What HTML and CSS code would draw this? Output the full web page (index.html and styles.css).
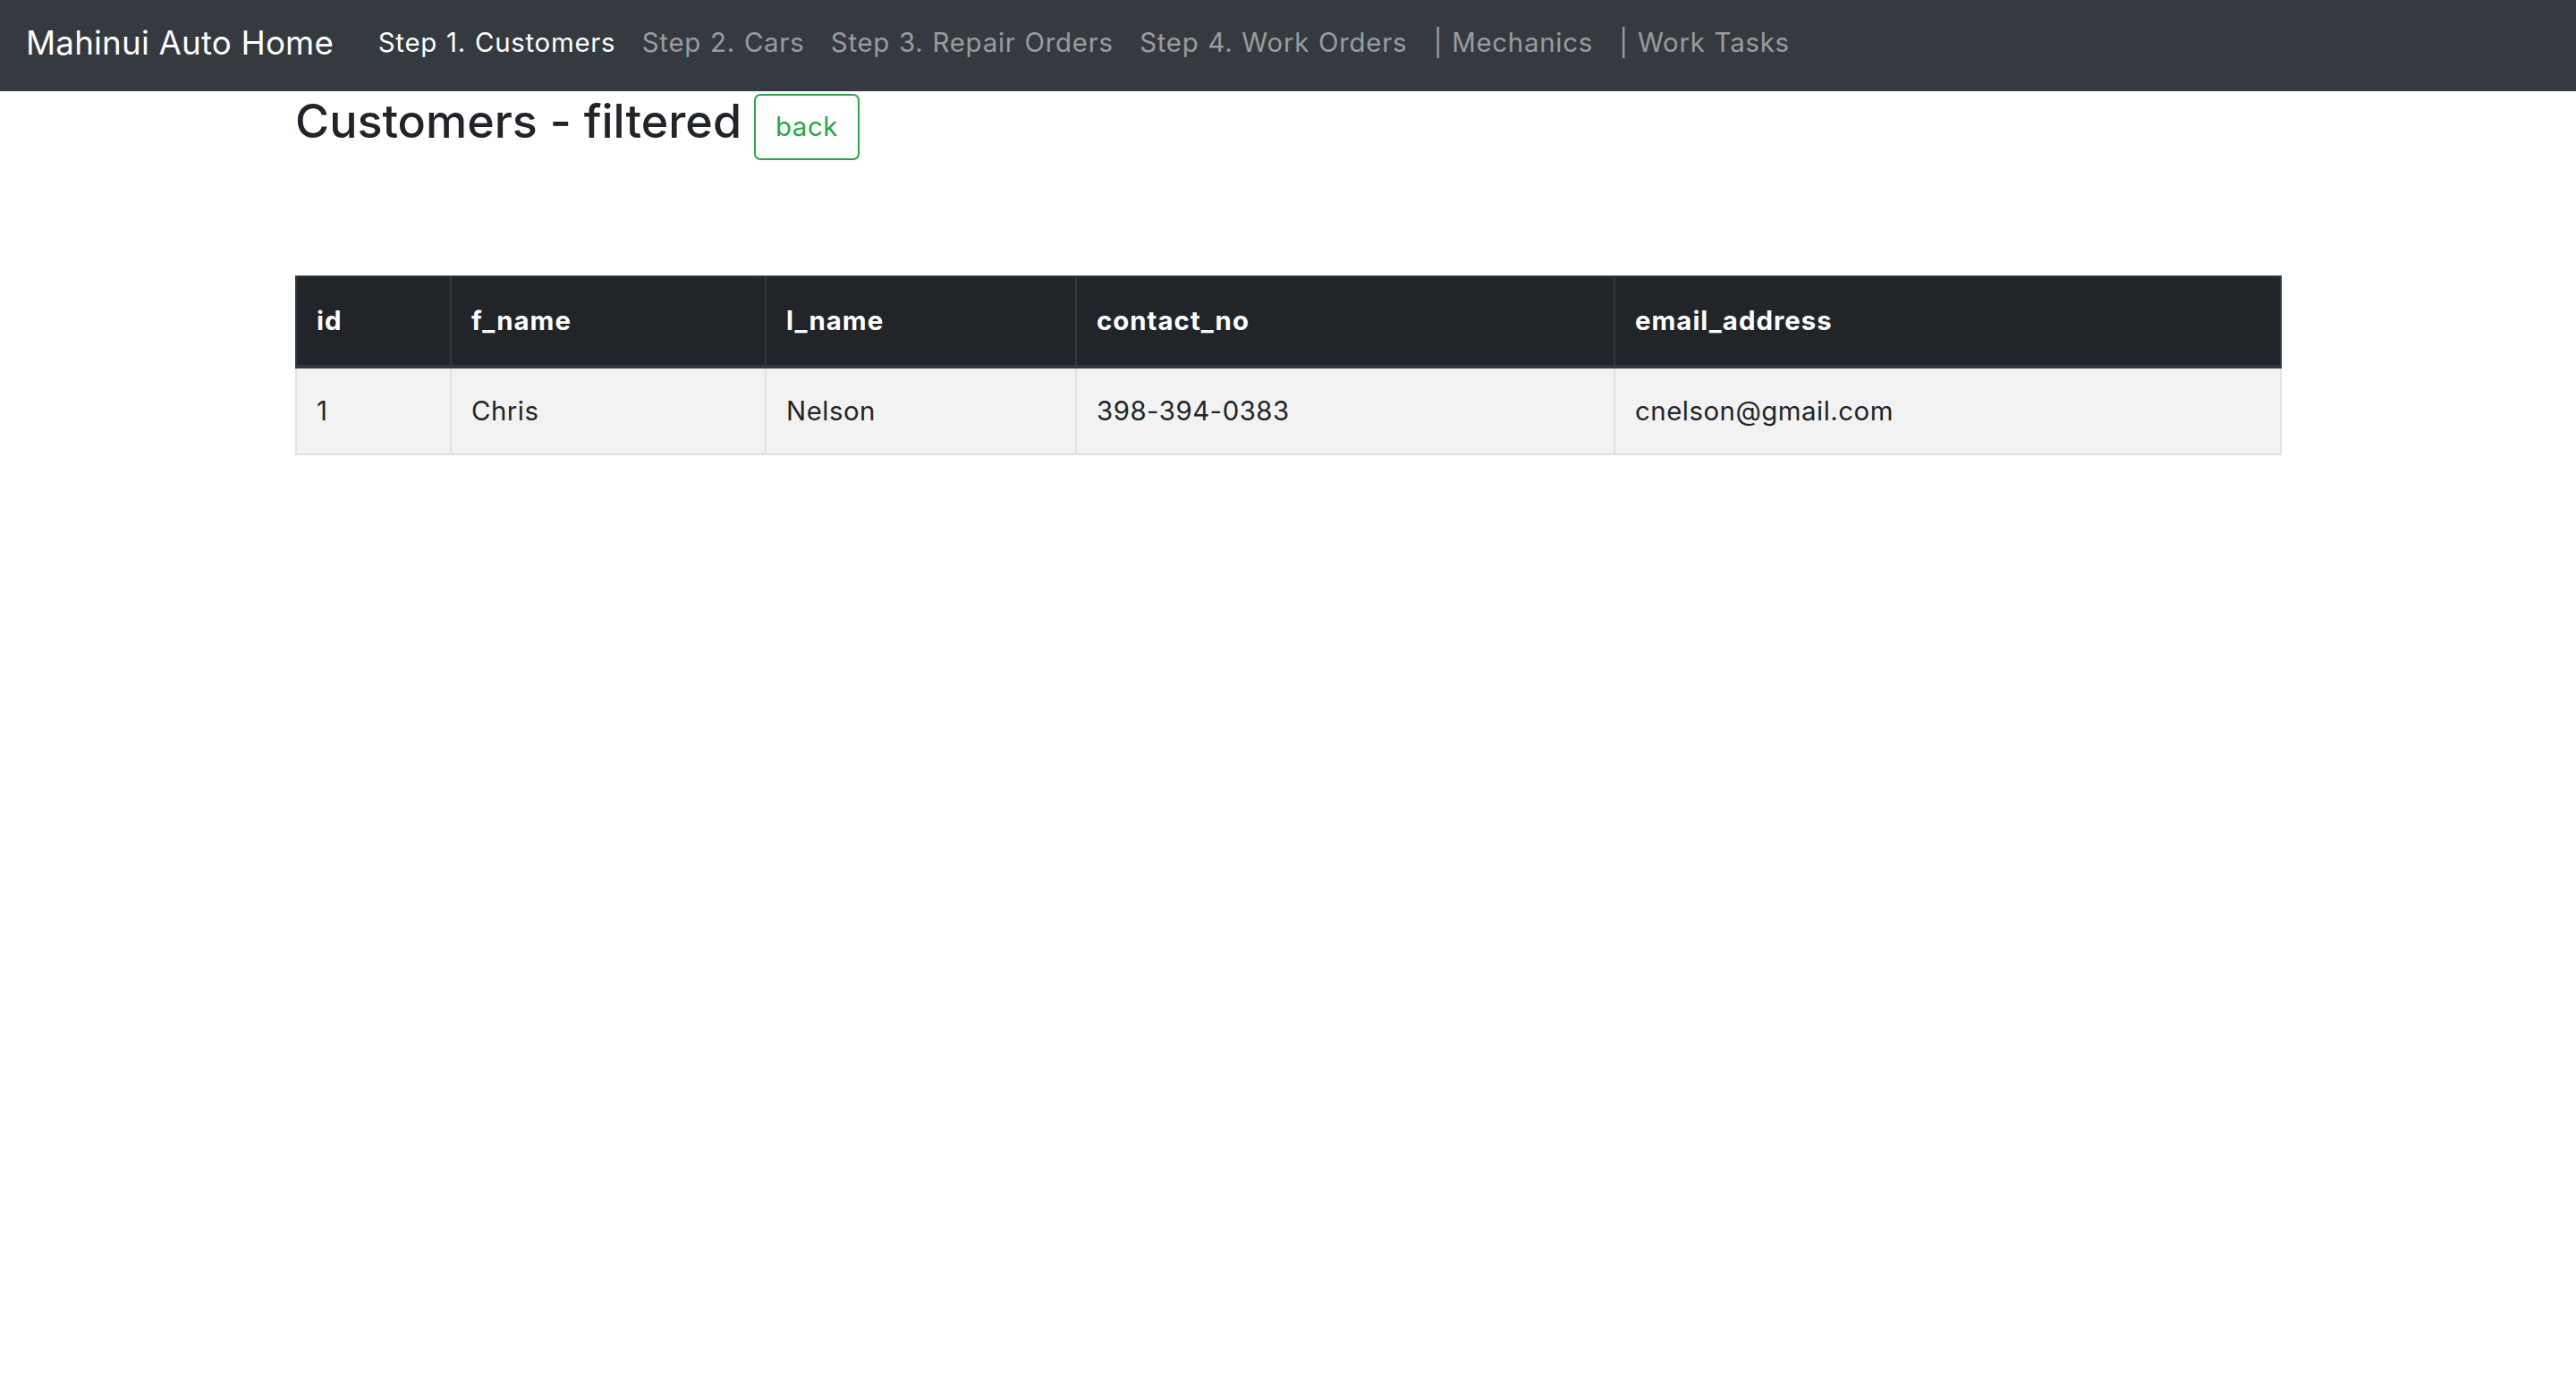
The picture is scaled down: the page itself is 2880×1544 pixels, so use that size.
FILE: index.html
```html
<!DOCTYPE html>
<html lang="en">
<head>
<meta charset="utf-8">
<title>Customers - filtered</title>
<link rel="stylesheet" href="styles.css">
</head>
<body>
<nav class="navbar">
  <a class="brand" href="#">Mahinui Auto Home</a>
  <ul class="nav">
    <li><a class="nav-link active" href="#">Step 1. Customers</a></li>
    <li><a class="nav-link" href="#">Step 2. Cars</a></li>
    <li><a class="nav-link" href="#">Step 3. Repair Orders</a></li>
    <li><a class="nav-link" href="#">Step 4. Work Orders</a></li>
    <li><a class="nav-link" href="#">| Mechanics</a></li>
    <li><a class="nav-link" href="#">| Work Tasks</a></li>
  </ul>
</nav>
<main class="container">
  <h3 class="title">Customers - filtered <a class="btn-back" href="#">back</a></h3>
  <table class="data-table">
    <colgroup>
      <col class="c-id"><col class="c-f"><col class="c-l"><col class="c-contact"><col class="c-email">
    </colgroup>
    <thead>
      <tr><th>id</th><th>f_name</th><th>l_name</th><th>contact_no</th><th>email_address</th></tr>
    </thead>
    <tbody>
      <tr><td>1</td><td>Chris</td><td>Nelson</td><td>398-394-0383</td><td>cnelson@gmail.com</td></tr>
    </tbody>
  </table>
</main>
</body>
</html>
```
FILE: styles.css
```css
* { box-sizing: border-box; }
html, body { margin: 0; padding: 0; background: #fff; }
body {
  font-family: Inter, "Noto Sans", "Liberation Sans", sans-serif;
  font-size: 29.4px;
  line-height: 1.5;
  color: #212529;
}
a { text-decoration: none; }

.navbar {
  display: flex;
  align-items: center;
  height: 102px;
  padding: 0 29px 6px;
  background: #343a40;
}
.brand {
  font-size: 36.7px;
  letter-spacing: 0.2px;
  color: #fff;
  margin-right: 35px;
  white-space: nowrap;
}
.nav {
  display: flex;
  list-style: none;
  margin: 0;
  padding: 0;
}
.nav-link {
  display: block;
  padding: 0 14.7px;
  letter-spacing: 0.74px;
  word-spacing: 1px;
  color: rgba(255,255,255,0.5);
  white-space: nowrap;
}
.nav-link.active { color: #fff; }

.container {
  width: 2220px;
  margin: 0 auto;
}
.title {
  font-size: 52px;
  font-weight: 500;
  line-height: 1.2;
  margin: 0;
  padding-top: 3px;
}
.btn-back {
  display: inline-block;
  font-size: 29.4px;
  font-weight: 400;
  line-height: 1.5;
  letter-spacing: 0.6px;
  padding: 13px 22px;
  color: #28a745;
  border: 2px solid #28a745;
  border-radius: 7px;
  vertical-align: 2px;
}

.data-table {
  width: 100%;
  border-collapse: collapse;
  table-layout: fixed;
  margin-top: 129px;
  border: 2px solid #dee2e6;
}
.c-id { width: 173px; }
.c-f { width: 352px; }
.c-l { width: 347px; }
.c-contact { width: 602px; }
.c-email { width: 745px; }

.data-table th,
.data-table td {
  text-align: left;
  padding: 0 22px;
  vertical-align: middle;
}
.data-table th {
  height: 101px;
  font-weight: 700;
  letter-spacing: 1px;
  color: #fff;
  background: #212529;
  border: 2px solid #32383e;
  border-bottom-width: 4px;
}
.data-table td {
  height: 98px;
  letter-spacing: 0.5px;
  background: #f2f2f2;
  border: 2px solid #dee2e6;
}
```
